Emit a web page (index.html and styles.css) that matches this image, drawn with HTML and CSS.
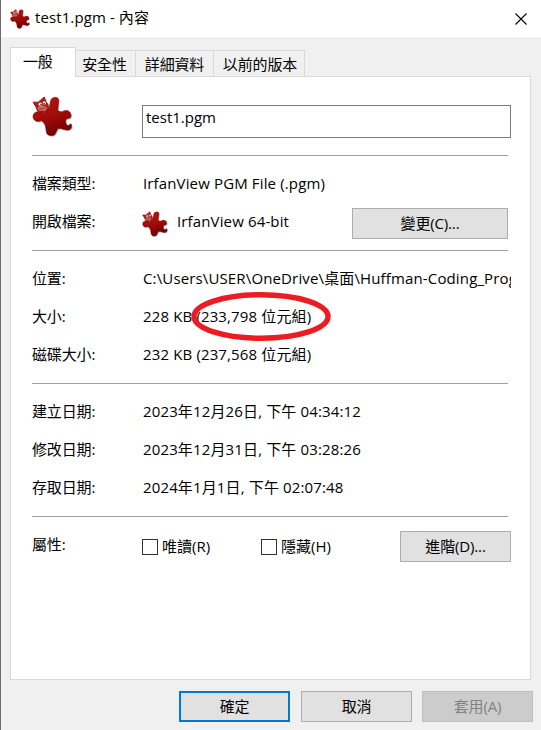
FILE: index.html
```html
<!DOCTYPE html>
<html lang="zh-Hant">
<head>
<meta charset="utf-8">
<title>test1.pgm - 內容</title>
<link rel="stylesheet" href="styles.css">
</head>
<body>
<svg width="0" height="0" class="defs" aria-hidden="true">
  <defs>
    <linearGradient id="red" x1="0" y1="0" x2="0.3" y2="1"><stop offset="0" stop-color="#b81208"/><stop offset="0.55" stop-color="#a30d09"/><stop offset="1" stop-color="#780000"/></linearGradient>
    <symbol id="cat" viewBox="0 0 40 40">
      <path fill="#777" opacity=".55" transform="translate(.9 1)" d="M12 16L17 11L18 5C19 0 27 0 26 5L25 14Q27 16 30 15C33 13 38 14 38 19C38 23 34 21 33 23Q32 27 35 29L38 27C40 31 37 34 33 33C29 32 27 31 25 32L23 36C22 40 14 39 14 35L13 29Q12 26 9 24C5 26 1 24 1 20C1 15 7 14 12 16Z"/>
      <path fill="url(#red)" stroke="#650604" stroke-width=".5" d="M12 16L17 11L18 5C19 0 27 0 26 5L25 14Q27 16 30 15C33 13 38 14 38 19C38 23 34 21 33 23Q32 27 35 29L38 27C40 31 37 34 33 33C29 32 27 31 25 32L23 36C22 40 14 39 14 35L13 29Q12 26 9 24C5 26 1 24 1 20C1 15 7 14 12 16Z"/>
      <path fill="#b51c17" stroke="#701612" stroke-width=".8" d="M1 6L6 6L12 1L14 6Q18 10 15 14Q10 17 5 14L4 11Z"/>
      <ellipse cx="10" cy="12" rx="4.5" ry="2.5" fill="#cf6963"/>
      <circle cx="8" cy="8" r="1.6" fill="#eee"/><circle cx="12" cy="6.8" r="1.6" fill="#eee"/>
      <circle cx="8.7" cy="8.3" r=".7" fill="#222"/><circle cx="11.8" cy="7.3" r=".7" fill="#222"/>
      <path d="M7 12Q10 14 13 11" fill="none" stroke="#8a2020" stroke-width=".7"/>
    </symbol>
  </defs>
</svg>
<div class="window">
  <header class="titlebar">
    <svg class="title-icon"><use href="#cat"/></svg>
    <span class="title">test1.pgm - 內容</span>
    <svg class="close" viewBox="0 0 12 12"><path d="M.5 .5L11.5 11.5M11.5 .5L.5 11.5"/></svg>
  </header>
  <nav class="tabs">
    <div class="tab active">一般</div>
    <div class="tab t2">安全性</div>
    <div class="tab t3">詳細資料</div>
    <div class="tab t4">以前的版本</div>
  </nav>
  <main class="panel">
    <section class="file">
      <svg class="file-icon"><use href="#cat"/></svg>
      <div class="input"><span>test1.pgm</span></div>
    </section>
    <section class="group">
      <div class="row"><span class="label">檔案類型:</span><span class="value">IrfanView PGM File (.pgm)</span></div>
      <div class="row"><span class="label">開啟檔案:</span><svg class="app-icon"><use href="#cat"/></svg><span class="app">IrfanView 64-bit</span><div class="button change">變更(C)...</div></div>
    </section>
    <section class="group">
      <div class="row"><span class="label">位置:</span><span class="value path">C:\Users\USER\OneDrive\桌面\Huffman-Coding_Prog</span></div>
      <div class="row"><span class="label">大小:</span><span class="value size">228 KB (233,798 位元組)<svg class="ring" viewBox="0 0 140 49"><ellipse cx="70" cy="24.5" rx="67" ry="21.8"/></svg></span></div>
      <div class="row"><span class="label">磁碟大小:</span><span class="value">232 KB (237,568 位元組)</span></div>
    </section>
    <section class="group">
      <div class="row"><span class="label">建立日期:</span><span class="value">2023年12月26日, 下午 04:34:12</span></div>
      <div class="row"><span class="label">修改日期:</span><span class="value">2023年12月31日, 下午 03:28:26</span></div>
      <div class="row"><span class="label">存取日期:</span><span class="value">2024年1月1日, 下午 02:07:48</span></div>
    </section>
    <section class="group attributes">
      <span class="label">屬性:</span>
      <div class="check"><i class="box"></i><span>唯讀(R)</span></div>
      <div class="check"><i class="box"></i><span>隱藏(H)</span></div>
      <div class="button advanced">進階(D)...</div>
    </section>
  </main>
  <footer class="actions">
    <div class="button primary">確定</div>
    <div class="button">取消</div>
    <div class="button disabled">套用(A)</div>
  </footer>
</div>
</body>
</html>
```
FILE: styles.css
```css
* { box-sizing: border-box; }
body { margin: 0; font: 15px/20px "Open Sans", "Noto Sans CJK TC", sans-serif; letter-spacing: -0.15px; color: #000; }
.defs { position: absolute; }
.window { width: 541px; height: 730px; background: #f0f0f0; border-left: 1px solid #6c6c6c; overflow: hidden; white-space: nowrap; }
.titlebar { height: 37px; background: #fff; display: flex; align-items: center; padding: 0 14px 0 9px; }
.title-icon { width: 20px; height: 20px; }
.title { margin-left: 5px; padding-bottom: 3px; letter-spacing: 0.1px; }
.close { width: 12px; height: 12px; margin-left: auto; stroke: #000; stroke-width: 1.1; }
.tabs { height: 39px; padding: 10px 0 0 9px; display: flex; align-items: flex-end; }
.tab { height: 27px; margin-bottom: -1px; border: 1px solid #d9d9d9; border-left: 0; padding-top: 3px; text-align: center; }
.tab.active { width: 66px; height: 30px; background: #fff; border-left: 1px solid #d9d9d9; border-bottom: 0; padding: 3px 0 0 12px; text-align: left; z-index: 1; }
.t2 { width: 60px; padding-right: 2px; }
.t3 { width: 78px; }
.t4 { width: 91px; padding-left: 2px; }
.panel { width: 521px; height: 604px; margin-left: 9px; background: #fff; border: 1px solid #d9d9d9; padding: 0 19px 0 21px; }
.file { height: 78px; display: flex; align-items: flex-start; }
.file-icon { width: 41px; height: 41px; margin-top: 19px; }
.input { width: 369px; height: 33px; margin: 28px 0 0 69px; border: 1px solid #7a7a7a; padding: 1px 3px; letter-spacing: 0; }
.group { width: 476px; border-top: 1px solid #a0a0a0; padding: 9px 0; }
.row { height: 38px; display: flex; align-items: center; }
.label, .value, .app { padding-bottom: 2px; }
.label { width: 111px; flex: none; }
.value, .app { letter-spacing: 0.14px; }
.path { width: 368px; flex: none; overflow: hidden; }
.size { position: relative; }
.ring { position: absolute; left: 48px; top: -14px; width: 140px; height: 49px; fill: none; stroke: #ed1c24; stroke-width: 5.4; }
.app-icon { width: 26px; height: 26px; margin: 4px 0 0 -1px; }
.app { margin-left: 9px; }
.button { height: 31px; width: 111px; background: #e1e1e1; border: 1px solid #adadad; padding-bottom: 2px; display: flex; align-items: center; justify-content: center; flex: none; }
.change { width: 156px; margin: 3px 0 0 auto; }
.attributes { padding: 14px 0 0; display: flex; align-items: flex-start; }
.attributes .label { padding-top: 3px; width: 110px; }
.check { width: 119px; display: flex; padding-top: 6px; flex: none; letter-spacing: 0; }
.check span { margin-top: -1px; }
.box { width: 16px; height: 16px; border: 1px solid #333; margin: 2px 4px 0 0; flex: none; }
.advanced { margin: 0 -3px 0 auto; }
.actions { display: flex; gap: 10px; justify-content: flex-end; padding: 11px 8px 0 0; }
.primary { border: 2px solid #0078d7; margin-right: 1px; }
.disabled { background: #ccc; border-color: #bfbfbf; color: #838383; }
```
